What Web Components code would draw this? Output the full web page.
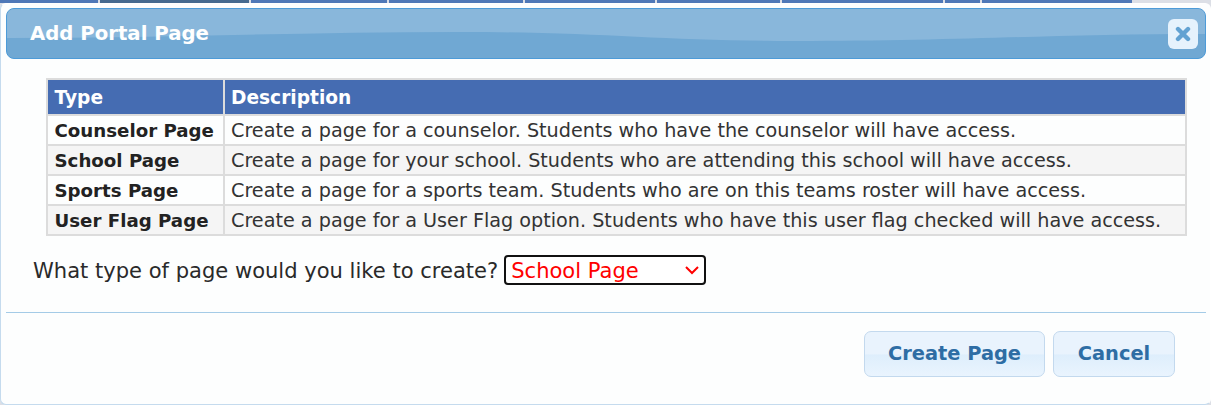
<!DOCTYPE html>
<html><head><meta charset="utf-8"><style>
html,body{margin:0;padding:0;width:1211px;height:405px;overflow:hidden;background:#dcdfe6;font-family:"DejaVu Sans",sans-serif}
</style></head><body>
<page-backdrop>
<portal-dialog heading="Add Portal Page">
<type-table></type-table>
<p-prompt label="What type of page would you like to create?" value="School Page"></p-prompt>
<button-row slot="footer"></button-row>
</portal-dialog>
</page-backdrop>
<script>
class PageBackdrop extends HTMLElement{constructor(){super();this.attachShadow({mode:'open'}).innerHTML=`<style>
:host{display:block;position:relative;width:1211px;height:405px;overflow:hidden}
.strip{display:flex;height:3px;width:1132px;gap:2px}
.strip i{display:block;background:#4f78b8;height:3px}
.strip i.dk{background:#456a90}
.d{position:absolute;left:0;top:3px}
</style><div class="strip"><i style="width:98px"></i><i class="dk" style="width:149px"></i><i style="width:136px"></i><i style="width:134px"></i><i style="width:131px"></i><i style="width:123px"></i><i style="width:161px"></i><i style="width:35px"></i><i style="width:150px"></i></div><div class="d"><slot></slot></div>`}}
customElements.define('page-backdrop',PageBackdrop);

class PortalDialog extends HTMLElement{constructor(){super();this.attachShadow({mode:'open'}).innerHTML=`<style>
:host{display:block;box-sizing:border-box;width:1211px;height:402px;background:#fdfefe;border:1px solid #c5dbee;border-top-color:#fff;border-right-color:#fff;border-radius:6px;padding:4px 4px 0 5px;color:#222}
header{position:relative;overflow:hidden;box-sizing:border-box;height:51px;border:1px solid #4d9bd8;border-radius:8px;display:flex;align-items:center;justify-content:space-between;padding:0 7px 0 23px;background:#70a8d3;color:#fff;font-weight:bold;font-size:19.7px}
header svg.g{position:absolute;left:0;top:0;width:100%;height:100%}
.t{position:relative}
.x{position:relative;width:30px;height:30px;box-sizing:border-box;background:#e6f2fc;border-radius:6px;display:flex;align-items:center;justify-content:center}
.body{padding:19px 19px 0 40px}
hr{border:0;height:1px;background:#a4cbe7;margin:27px 0 0 0}
</style><header><svg class="g" viewBox="0 0 1200 49" preserveAspectRatio="none"><path d="M0 0H1200V25C1050 25 950 32 790 32C650 32 600 23 450 23C300 23 150 29 0 29Z" fill="#89b7db" style="filter:blur(.7px)"/></svg><span class="t"></span><span class="x"><svg width="16" height="16" viewBox="0 0 16 16"><path d="M3 3 13 13M13 3 3 13" stroke="#63a2d2" stroke-width="4.4" stroke-linecap="round"/></svg></span></header>
<div class="body"><slot></slot></div><hr><slot name="footer"></slot>`;
this.shadowRoot.querySelector('.t').textContent=this.getAttribute('heading')}}
customElements.define('portal-dialog',PortalDialog);

class TypeTable extends HTMLElement{constructor(){super();
const rows=[['Counselor Page','Create a page for a counselor. Students who have the counselor will have access.'],['School Page','Create a page for your school. Students who are attending this school will have access.'],['Sports Page','Create a page for a sports team. Students who are on this teams roster will have access.'],['User Flag Page','Create a page for a User Flag option. Students who have this user flag checked will have access.']];
this.attachShadow({mode:'open'}).innerHTML=`<style>
:host{display:block;width:1141px}
table{border-collapse:separate;border-spacing:0;width:100%;table-layout:fixed;font-size:19.2px;border:2px solid #dcdcdc}
th{background:#456cb2;color:#fff;text-align:left;height:36px;padding:0 0 0 6px;font-size:18.6px;border-right:2px solid #dcdcdc;border-bottom:2px solid #dcdcdc;box-sizing:border-box}
td{height:30px;box-sizing:border-box;padding:0 0 0 6px;border-right:2px solid #dcdcdc;border-bottom:2px solid #dcdcdc;color:#333;white-space:nowrap}
tr:last-child td{border-bottom:0;height:28px}
th:last-child,td:last-child{border-right:0}
th:first-child{padding-left:6.5px}
td:first-child{font-weight:bold;color:#222;font-size:18.2px;padding-left:6.5px}
tr:nth-child(even) td{background:#f5f5f5}
</style><table><colgroup><col style="width:177px"><col></colgroup><thead><tr><th>Type</th><th>Description</th></tr></thead><tbody>${rows.map(r=>`<tr><td>${r[0]}</td><td>${r[1]}</td></tr>`).join('')}</tbody></table>`}}
customElements.define('type-table',TypeTable);

class PPrompt extends HTMLElement{constructor(){super();this.attachShadow({mode:'open'}).innerHTML=`<style>
:host{display:flex;align-items:center;gap:6px;margin:19px 0 0 -13px;font-size:21.05px;color:#2a2a2a;height:30px}
.l{padding-top:1px}
.sel{box-sizing:border-box;width:202px;height:30px;border:2px solid #111;border-radius:4px;background:#fff;color:#f00;display:flex;align-items:center;justify-content:space-between;padding:0 5px 0 5px;font-size:21.05px}
</style><span class="l">${this.getAttribute('label')}</span><span class="sel"><span class="l">${this.getAttribute('value')}</span><svg width="14" height="10" viewBox="0 0 14 10"><path d="M1 2 7 8 13 2" fill="none" stroke="#f00" stroke-width="2"/></svg></span>`}}
customElements.define('p-prompt',PPrompt);

class ButtonRow extends HTMLElement{constructor(){super();this.attachShadow({mode:'open'}).innerHTML=`<style>
:host{display:flex;justify-content:flex-end;gap:8px;padding:18px 31px 0 0}
span{box-sizing:border-box;height:46px;padding-bottom:2px;border:1px solid #c3d9ee;border-radius:7px;display:flex;align-items:center;justify-content:center;font-weight:bold;font-size:19.4px;color:#2e6da4;background:linear-gradient(180deg,#e9f3fd 0,#e9f3fd 50%,#deeefc 52%,#e9f4fe 100%)}
</style><span style="width:181px">Create Page</span><span style="width:122px">Cancel</span>`}}
customElements.define('button-row',ButtonRow);
</script></body></html>
